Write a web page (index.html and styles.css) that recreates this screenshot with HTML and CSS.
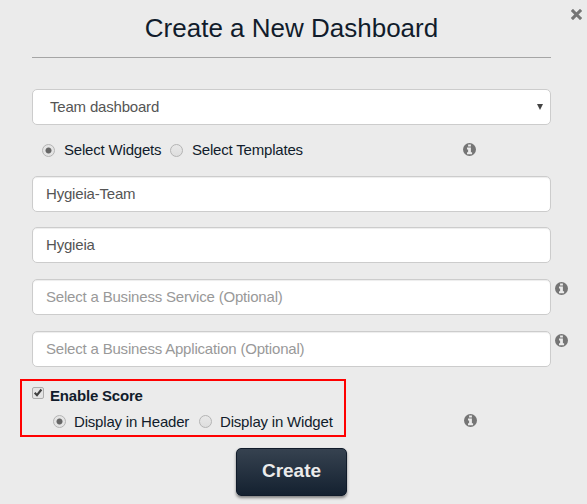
FILE: index.html
```html
<!DOCTYPE html>
<html lang="en">
<head>
<meta charset="utf-8">
<title>Create a New Dashboard</title>
<link rel="stylesheet" href="styles.css">
</head>
<body>
<svg class="symbols" aria-hidden="true">
  <symbol id="info" viewBox="0 0 13 13">
    <circle cx="6.5" cy="6.5" r="6.5" fill="#757575"/>
    <path d="M5.1 1.4h2.8v2.2H5.1zM4 4.6h3.9v4.7h1.2v1.9H4V9.3h1.1V6.5H4z" fill="#ebebeb"/>
  </symbol>
</svg>
<main class="modal">
  <button class="close" aria-label="Close"><svg width="11" height="11" viewBox="0 0 11 11"><path d="M2 2l7 7M9 2l-7 7" stroke="#757575" stroke-width="3.1" stroke-linecap="square"/></svg></button>
  <h1 class="title"><span>Create a New Dashboard</span></h1>
  <form class="form">
    <div class="field select"><span>Team dashboard</span><svg class="arrow" width="6" height="6" viewBox="0 0 6 6"><path d="M0 0h6L3 6z" fill="#444"/></svg></div>
    <div class="options">
      <i class="radio on"></i><span class="label widgets">Select Widgets</span>
      <i class="radio"></i><span class="label templates">Select Templates</span>
      <svg class="info"><use href="#info"/></svg>
    </div>
    <div class="field">Hygieia-Team</div>
    <div class="field second">Hygieia</div>
    <div class="optional service"><div class="field muted"><span>Select a Business Service (Optional)</span></div><svg class="info"><use href="#info"/></svg></div>
    <div class="optional application"><div class="field muted"><span>Select a Business Application (Optional)</span></div><svg class="info"><use href="#info"/></svg></div>
    <div class="score-row">
      <div class="score">
        <div class="enable"><i class="checkbox"><svg width="12" height="12" viewBox="0 0 12 12"><path d="M2.7 5.7L5 8.2 9.4 2.5" fill="none" stroke="#404040" stroke-width="2.1"/></svg></i><b>Enable Score</b></div>
        <div class="display"><i class="radio on"></i><span class="label header">Display in Header</span><i class="radio"></i><span class="label">Display in Widget</span></div>
      </div>
      <svg class="info"><use href="#info"/></svg>
    </div>
    <button class="create" type="button">Create</button>
  </form>
</main>
</body>
</html>
```
FILE: styles.css
```css
* { box-sizing: border-box; }
body { margin: 0; background: #ebebeb; color: #111c2b; font: 15px/20px "Liberation Sans", Arial, sans-serif; letter-spacing: -.19px; }
.symbols { display: none; }
.modal { position: relative; width: 587px; height: 504px; padding: 0 36px 0 32px; overflow: hidden; }
.close { position: absolute; top: 9px; right: 5px; width: 11px; height: 11px; padding: 0; border: 0; background: none; }
.close svg { display: block; }
.title { height: 58px; margin: 0; padding-top: 12px; border-bottom: 1px solid #a5a5a5; text-align: center; font-size: 26px; line-height: 32px; font-weight: 400; letter-spacing: 0; white-space: nowrap; }
.form { display: flex; flex-direction: column; padding-top: 31px; }
.field { display: flex; align-items: center; width: 519px; height: 36px; padding: 0 13px 1px; border: 1px solid #ccc; border-radius: 5px; background: #fff; box-shadow: inset 0 1px 1px rgba(0,0,0,.075); color: #555; white-space: nowrap; }
.select { justify-content: space-between; padding: 0 7px 1px 17px; box-shadow: none; }
.options { display: flex; align-items: center; height: 51px; padding-left: 10px; }
.radio { flex: none; width: 13px; height: 13px; border: 1px solid #b4b4b4; border-radius: 50%; background: linear-gradient(#e8e8e8, #dedede); }
.radio.on { background: radial-gradient(circle, #666 0 2.6px, #e4e4e4 3.4px); }
.label { margin: -1px 0 0 9px; white-space: nowrap; }
.widgets { width: 97px; margin-right: 9px; }
.templates { width: 112px; margin-right: 159px; }
.info { flex: none; width: 13px; height: 13px; }
.options .info { margin-top: -3px; }
.second { margin-top: 15px; }
.optional { display: flex; width: 540px; }
.optional .info { margin: 3px 0 0 4px; }
.service { margin-top: 16px; }
.application { margin-top: 16px; }
.muted { color: #999; }
.score-row { display: flex; width: 519px; margin: 12px 0 0 -12px; }
.score { width: 326px; height: 58px; border: 2px solid #f00; padding: 6px 0 0 10px; }
.enable { display: flex; height: 20px; }
.enable b { margin: -1px 0 0 6px; }
.checkbox { width: 12px; height: 12px; border: 1px solid #adadad; border-radius: 2px; background: #e4e4e4; }
.checkbox svg { display: block; margin: -1px; }
.display { display: flex; align-items: center; height: 33px; margin-top: -2px; padding-left: 21px; }
.display .label { margin: 0 0 0 8px; }
.display .header { width: 116px; margin-right: 9px; }
.score-row .info { margin: 35px 0 0 118px; }
.create { width: 111px; height: 48px; margin: 11px 0 0 204px; padding: 0 0 2px; border: 1px solid #101b2a; border-radius: 5px; background: linear-gradient(#364250, #142130); box-shadow: 0 2px 3px rgba(0,0,0,.45); color: #ebebeb; font: bold 19px/24px "Liberation Sans", Arial, sans-serif; }
```
